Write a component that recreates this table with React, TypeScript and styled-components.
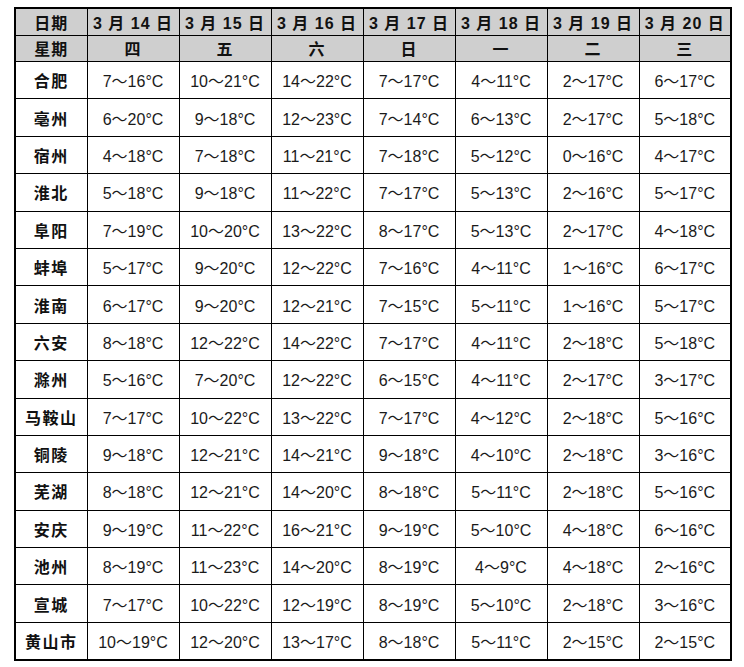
import React from "react";
import styled, { createGlobalStyle } from "styled-components";

const Global = createGlobalStyle`
  html, body { margin: 0; padding: 0; background: #fff; }
  body { font-family: "Liberation Sans", "Noto Sans CJK SC", sans-serif; }
`;

const Page = styled.div`
  padding: 7px 0 0 14px;
`;

const Table = styled.table`
  border-collapse: collapse;
  table-layout: fixed;
  width: 718px;
  border: 2px solid #000;
`;

const HeadCell = styled.th`
  background: #cfcfcf;
  border: 1.5px solid #000;
  height: 25.5px;
  padding: 0;
  font-weight: bold;
  font-size: 16px;
  color: #111;
  text-align: center;
  letter-spacing: 1px;
  white-space: nowrap;
`;

const CityCell = styled.th`
  border: 1.5px solid #000;
  height: 36.4px;
  padding: 0;
  font-weight: bold;
  font-size: 16px;
  color: #111;
  letter-spacing: 1.5px;
  text-align: center;
  white-space: nowrap;
`;

const TempCell = styled.td`
  border: 1.5px solid #000;
  height: 36.4px;
  padding: 0;
  font-size: 16px;
  color: #1a1a1a;
  text-align: center;
  white-space: nowrap;
`;

const dates = ["3 月 14 日", "3 月 15 日", "3 月 16 日", "3 月 17 日", "3 月 18 日", "3 月 19 日", "3 月 20 日"];
const weekdays = ["四", "五", "六", "日", "一", "二", "三"];

const rows: [string, string[]][] = [
  ["合肥", ["7～16", "10～21", "14～22", "7～17", "4～11", "2～17", "6～17"]],
  ["亳州", ["6～20", "9～18", "12～23", "7～14", "6～13", "2～17", "5～18"]],
  ["宿州", ["4～18", "7～18", "11～21", "7～18", "5～12", "0～16", "4～17"]],
  ["淮北", ["5～18", "9～18", "11～22", "7～17", "5～13", "2～16", "5～17"]],
  ["阜阳", ["7～19", "10～20", "13～22", "8～17", "5～13", "2～17", "4～18"]],
  ["蚌埠", ["5～17", "9～20", "12～22", "7～16", "4～11", "1～16", "6～17"]],
  ["淮南", ["6～17", "9～20", "12～21", "7～15", "5～11", "1～16", "5～17"]],
  ["六安", ["8～18", "12～22", "14～22", "7～17", "4～11", "2～18", "5～18"]],
  ["滁州", ["5～16", "7～20", "12～22", "6～15", "4～11", "2～17", "3～17"]],
  ["马鞍山", ["7～17", "10～22", "13～22", "7～17", "4～12", "2～18", "5～16"]],
  ["铜陵", ["9～18", "12～21", "14～21", "9～18", "4～10", "2～18", "3～16"]],
  ["芜湖", ["8～18", "12～21", "14～20", "8～18", "5～11", "2～18", "5～16"]],
  ["安庆", ["9～19", "11～22", "16～21", "9～19", "5～10", "4～18", "6～16"]],
  ["池州", ["8～19", "11～23", "14～20", "8～19", "4～9", "4～18", "2～16"]],
  ["宣城", ["7～17", "10～22", "12～19", "8～19", "5～10", "2～18", "3～16"]],
  ["黄山市", ["10～19", "12～20", "13～17", "8～18", "5～11", "2～15", "2～15"]],
];

export default function App() {
  return (
    <Page>
      <Global />
      <Table>
        <colgroup>
          <col style={{ width: 72 }} />
          {dates.map((d) => (
            <col key={d} />
          ))}
        </colgroup>
        <thead>
          <tr>
            <HeadCell>日期</HeadCell>
            {dates.map((d) => (
              <HeadCell key={d}>{d}</HeadCell>
            ))}
          </tr>
          <tr>
            <HeadCell>星期</HeadCell>
            {weekdays.map((w) => (
              <HeadCell key={w}>{w}</HeadCell>
            ))}
          </tr>
        </thead>
        <tbody>
          {rows.map(([city, temps]) => (
            <tr key={city}>
              <CityCell>{city}</CityCell>
              {temps.map((t, i) => (
                <TempCell key={i}>{t}°C</TempCell>
              ))}
            </tr>
          ))}
        </tbody>
      </Table>
    </Page>
  );
}
